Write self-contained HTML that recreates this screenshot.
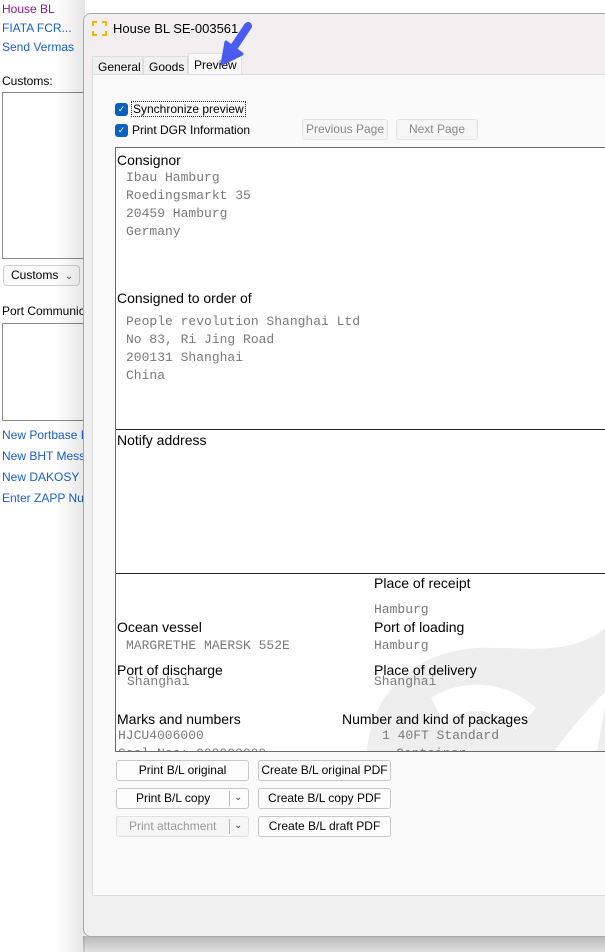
<!DOCTYPE html>
<html><head><meta charset="utf-8"><style>
*{margin:0;padding:0;box-sizing:border-box}
body{width:605px;height:952px;overflow:hidden;background:#fff;font-family:"Liberation Sans",sans-serif;font-size:12px;color:#000;position:relative}
.a{position:absolute;white-space:nowrap}
.lk{color:#1a5fd0}
.m{font-family:"Liberation Mono",monospace;font-size:13px;color:#7a7a7a;position:absolute;white-space:nowrap}
.h{font-family:"Liberation Sans",sans-serif;font-size:14px;position:absolute;white-space:nowrap;color:#000}
.btn{position:absolute;background:#fdfdfd;border:1px solid #c8c8c8;border-radius:3px;text-align:center;font-size:12px;line-height:19px;height:21px}
</style></head><body>
<div class="a" style="left:2px;top:2px;color:#8a1a9a">House BL</div>
<div class="a lk" style="left:2px;top:21px">FIATA FCR...</div>
<div class="a lk" style="left:2px;top:40px">Send Vermas</div>
<div class="a" style="left:2px;top:74px">Customs:</div>
<div class="a" style="left:2px;top:92px;width:85px;height:167px;border:1px solid #8a8a8a;background:#fff"></div>
<div class="a" style="left:3px;top:265px;width:77px;height:21px;border:1px solid #d0d0d0;border-radius:4px;background:#fbfbfb;padding:2px 0 0 7px">Customs <span style="color:#555;font-size:10px;margin-left:3px">&#8964;</span></div>
<div class="a" style="left:2px;top:304px">Port Communication</div>
<div class="a" style="left:2px;top:323px;width:85px;height:98px;border:1px solid #8a8a8a;background:#fff"></div>
<div class="a lk" style="left:2px;top:428px">New Portbase E</div>
<div class="a lk" style="left:2px;top:449px">New BHT Messa</div>
<div class="a lk" style="left:2px;top:470px">New DAKOSY M</div>
<div class="a lk" style="left:2px;top:491px">Enter ZAPP Num</div>
<div class="a" style="left:55px;top:0;width:30px;height:952px;background:linear-gradient(90deg,rgba(0,0,0,0),rgba(0,0,0,0.1))"></div>
<div class="a" style="left:83px;top:936px;width:522px;height:16px;background:linear-gradient(180deg,rgba(0,0,0,0.28),rgba(0,0,0,0.12))"></div>
<!-- window -->
<div class="a" style="left:83px;top:13px;width:540px;height:924px;background:#f0f0f0;border:1px solid #a8a8a8;border-radius:8px;overflow:hidden">
 <div class="a" style="left:0;top:0;width:540px;height:60px;background:#f3eff0"></div>
 <svg class="a" style="left:8px;top:7px" width="15" height="15" viewBox="0 0 15 15"><g fill="#f2b500"><rect x="0" y="0" width="5" height="2"/><rect x="0" y="0" width="2" height="5"/><rect x="10" y="0" width="5" height="2"/><rect x="13" y="0" width="2" height="5"/><rect x="0" y="13" width="5" height="2"/><rect x="0" y="10" width="2" height="5"/><rect x="10" y="13" width="5" height="2"/><rect x="13" y="10" width="2" height="5"/></g></svg>
 <div class="a" style="left:29px;top:7px;font-size:13px">House BL SE-003561</div>
 <div class="a" style="left:8px;top:42px;width:51px;height:19px;border:1px solid #ddd;border-bottom:none;background:#f0f0f0;padding:3px 0 0 5px">General</div>
 <div class="a" style="left:59px;top:42px;width:45px;height:19px;border:1px solid #ddd;border-bottom:none;background:#f0f0f0;padding:3px 0 0 5px">Goods</div>
 <div class="a" style="left:104px;top:39px;width:54px;height:23px;border:1px solid #ddd;border-bottom:none;background:#fafafa;padding:4px 0 0 5px">Preview</div>
 <div class="a" style="left:8px;top:60px;width:540px;height:822px;background:#fafafa;border:1px solid #dcdcdc"></div>
</div>
<svg class="a" style="left:215px;top:18px" width="45" height="55" viewBox="0 0 45 55"><path d="M33 8 L17 32" stroke="#4a5cf0" stroke-width="8" stroke-linecap="round"/><path d="M7 46 L11 24 L27 36 Z" fill="#4a5cf0" stroke="#4a5cf0" stroke-width="3" stroke-linejoin="round"/></svg>
<!-- checkboxes -->
<div class="a" style="left:115px;top:103px;width:13px;height:13px;background:#0a5fc0;border-radius:3px;color:#fff;font-size:9px;line-height:13px;text-align:center">&#10003;</div>
<div class="a" style="left:131px;top:101px;border:1px dotted #333;padding:0 1px">Synchronize preview</div>
<div class="a" style="left:115px;top:124px;width:13px;height:13px;background:#0a5fc0;border-radius:3px;color:#fff;font-size:9px;line-height:13px;text-align:center">&#10003;</div>
<div class="a" style="left:132px;top:123px">Print DGR Information</div>
<div class="btn" style="left:302px;top:119px;width:86px;color:#888;background:#f6f6f6;border-color:#e2e2e2">Previous Page</div>
<div class="btn" style="left:396px;top:119px;width:82px;color:#888;background:#f6f6f6;border-color:#e2e2e2">Next Page</div>
<!-- preview -->
<div class="a" style="left:115px;top:147px;width:500px;height:605px;background:#fff;border:1px solid #6a6a6a;overflow:hidden">
 <svg class="a" style="left:230px;top:470px" width="280" height="140" viewBox="0 0 280 140"><path d="M20 140 C25 70 70 35 130 30 C180 28 220 40 260 10 L280 10 L280 140 L250 140 L262 70 C235 100 215 120 205 140 Z" fill="#eeeeee"/><path d="M85 80 C115 60 160 62 190 90 L170 112 C150 88 120 88 98 105 Z" fill="#fff"/></svg>
 <div class="a" style="left:0;top:281px;width:500px;border-top:1px solid #222"></div>
 <div class="a" style="left:0;top:425px;width:500px;border-top:1px solid #222"></div>
 <div class="h" style="left:1px;top:4px">Consignor</div>
 <div class="m" style="left:10px;top:22px">Ibau Hamburg</div>
 <div class="m" style="left:10px;top:40px">Roedingsmarkt 35</div>
 <div class="m" style="left:10px;top:58px">20459 Hamburg</div>
 <div class="m" style="left:10px;top:76px">Germany</div>
 <div class="h" style="left:1px;top:142px">Consigned to order of</div>
 <div class="m" style="left:10px;top:166px">People revolution Shanghai Ltd</div>
 <div class="m" style="left:10px;top:184px">No 83, Ri Jing Road</div>
 <div class="m" style="left:10px;top:202px">200131 Shanghai</div>
 <div class="m" style="left:10px;top:220px">China</div>
 <div class="h" style="left:1px;top:284px">Notify address</div>
 <div class="h" style="left:258px;top:427px">Place of receipt</div>
 <div class="m" style="left:258px;top:454px">Hamburg</div>
 <div class="h" style="left:1px;top:471px">Ocean vessel</div>
 <div class="h" style="left:258px;top:471px">Port of loading</div>
 <div class="m" style="left:10px;top:490px">MARGRETHE MAERSK 552E</div>
 <div class="m" style="left:258px;top:490px">Hamburg</div>
 <div class="h" style="left:1px;top:514px">Port of discharge</div>
 <div class="h" style="left:258px;top:514px">Place of delivery</div>
 <div class="m" style="left:11px;top:526px">Shanghai</div>
 <div class="m" style="left:258px;top:526px">Shanghai</div>
 <div class="h" style="left:1px;top:563px">Marks and numbers</div>
 <div class="h" style="left:226px;top:563px">Number and kind of packages</div>
 <div class="m" style="left:2px;top:580px">HJCU4006000</div>
 <div class="m" style="left:266px;top:580px">1 40FT Standard</div>
 <div class="m" style="left:2px;top:598px">Seal Nos: 000000000</div>
 <div class="m" style="left:280px;top:598px">Container</div>
</div>
<!-- buttons -->
<div class="btn" style="left:116px;top:760px;width:133px">Print B/L original</div>
<div class="btn" style="left:258px;top:760px;width:133px">Create B/L original PDF</div>
<div class="btn" style="left:116px;top:788px;width:133px;text-align:left;padding-left:19px">Print B/L copy<span style="position:absolute;left:112px;top:2px;height:15px;border-left:1px solid #bbb"></span><span style="position:absolute;left:117px;top:-1px;font-size:10px;color:#444">&#8964;</span></div>
<div class="btn" style="left:258px;top:788px;width:133px">Create B/L copy PDF</div>
<div class="btn" style="left:116px;top:816px;width:133px;text-align:left;padding-left:12px;color:#999;background:#f6f6f6;border-color:#e0e0e0">Print attachment<span style="position:absolute;left:112px;top:2px;height:15px;border-left:1px solid #bbb"></span><span style="position:absolute;left:117px;top:-1px;font-size:10px;color:#444">&#8964;</span></div>
<div class="btn" style="left:258px;top:816px;width:133px">Create B/L draft PDF</div>
</body></html>
